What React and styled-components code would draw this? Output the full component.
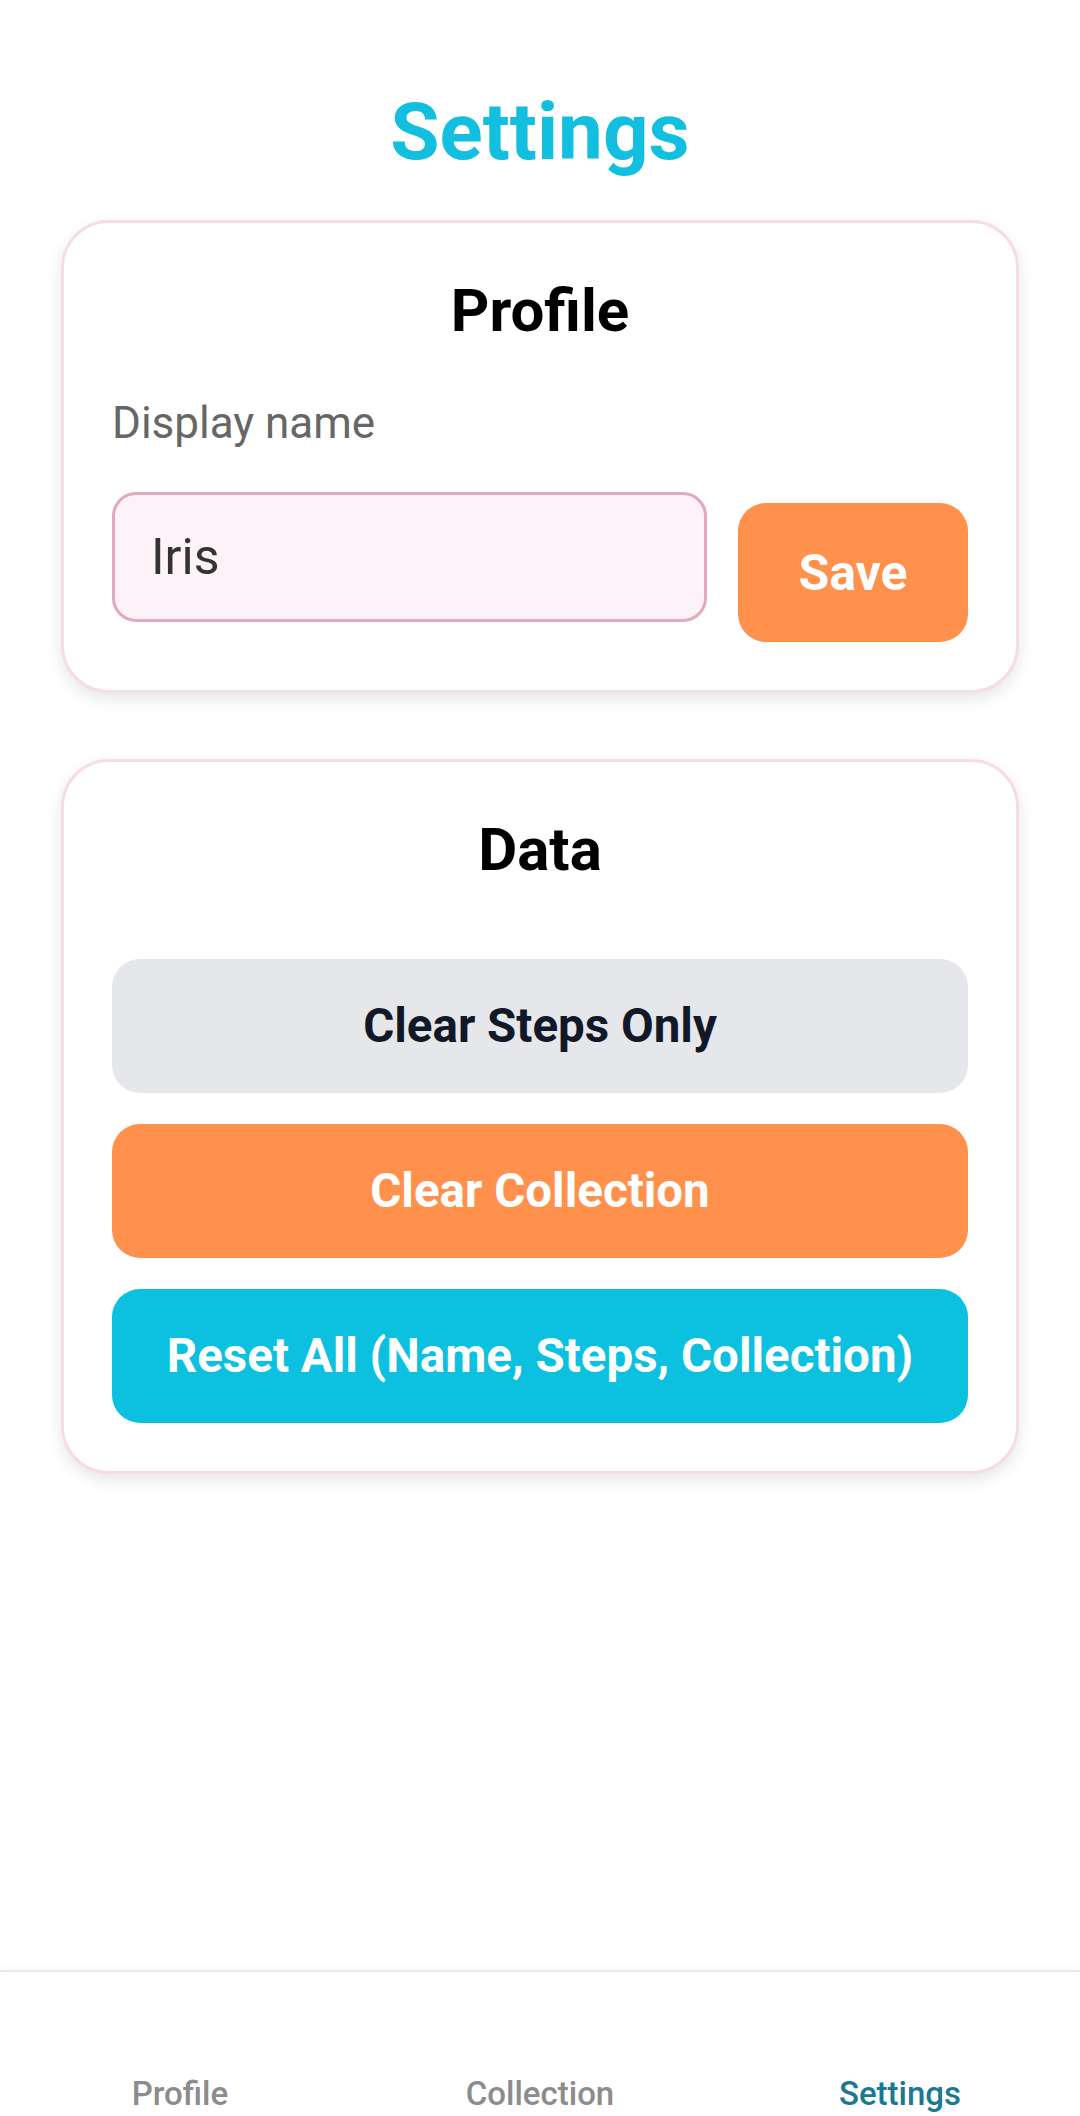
import React, { useState } from "react";
import styled, { createGlobalStyle } from "styled-components";

const GlobalStyle = createGlobalStyle`
    html, body {
        margin: 0;
        padding: 0;
        background: #ffffff;
    }
    body {
        font-family: Roboto, "Noto Sans", "Liberation Sans", sans-serif;
    }
    * {
        box-sizing: border-box;
    }
`;

const Page = styled.div`
    min-height: 100vh;
    display: flex;
    flex-direction: column;
`;

const Main = styled.main`
    flex: 1;
    display: flex;
    flex-direction: column;
    padding: 84px 61px 0;
`;

const Title = styled.h1`
    margin: 0 0 40px;
    font-size: 80px;
    line-height: 96px;
    font-weight: 700;
    color: #12bfdf;
    text-align: center;
`;

const Card = styled.section`
    background: #ffffff;
    border: 3px solid #f7dbe5;
    border-radius: 48px;
    padding: 52px 48px 48px;
    box-shadow: 0 6px 16px rgba(0, 0, 0, 0.1);
    margin-bottom: 66px;
`;

const CardTitle = styled.h2`
    margin: 0;
    font-size: 60px;
    line-height: 72px;
    font-weight: 700;
    color: #000000;
    text-align: center;
`;

const Label = styled.label`
    display: block;
    margin: 50px 0 43px;
    font-size: 44px;
    line-height: 52px;
    color: #666666;
`;

const Row = styled.div`
    display: flex;
    align-items: flex-start;
    gap: 31px;
`;

const NameInput = styled.input`
    flex: 1;
    min-width: 0;
    height: 130px;
    padding: 0 36px;
    border: 3px solid #e0aabf;
    border-radius: 24px;
    background: #fdf2f7;
    font-family: inherit;
    font-size: 50px;
    color: #333333;
    outline: none;
`;

const SaveButton = styled.button`
    margin-top: 11px;
    width: 230px;
    height: 139px;
    border: none;
    border-radius: 28px;
    background: #ff914d;
    color: #ffffff;
    font-family: inherit;
    font-size: 50px;
    font-weight: 700;
`;

const ButtonStack = styled.div`
    display: flex;
    flex-direction: column;
    gap: 31px;
    margin-top: 73px;
`;

const tones = {
    gray: { bg: "#e5e7eb", fg: "#111827" },
    orange: { bg: "#ff914d", fg: "#ffffff" },
    cyan: { bg: "#0cc0df", fg: "#ffffff" },
};

const ActionButton = styled.button`
    height: 134px;
    border: none;
    border-radius: 28px;
    background: ${({ $tone }) => tones[$tone].bg};
    color: ${({ $tone }) => tones[$tone].fg};
    font-family: inherit;
    font-size: 47.5px;
    font-weight: 700;
`;

const NavBar = styled.nav`
    height: 146px;
    display: grid;
    grid-template-columns: repeat(3, 1fr);
    align-items: end;
    padding-bottom: 2px;
    border-top: 2px solid #e9e9e9;
    box-shadow: 0 -2px 6px rgba(0, 0, 0, 0.03);
    background: #ffffff;
`;

const NavItem = styled.div`
    text-align: center;
    font-size: 33px;
    line-height: 40px;
    font-weight: 500;
    color: ${({ $active }) => ($active ? "#1b7895" : "#8c8c8c")};
`;

export default function App() {
    const [name, setName] = useState("Iris");

    return (
        <Page>
            <GlobalStyle />
            <Main>
                <Title>Settings</Title>

                <Card>
                    <CardTitle>Profile</CardTitle>
                    <Label htmlFor="display-name">Display name</Label>
                    <Row>
                        <NameInput
                            id="display-name"
                            value={name}
                            onChange={(e) => setName(e.target.value)}
                        />
                        <SaveButton>Save</SaveButton>
                    </Row>
                </Card>

                <Card>
                    <CardTitle>Data</CardTitle>
                    <ButtonStack>
                        <ActionButton $tone="gray">Clear Steps Only</ActionButton>
                        <ActionButton $tone="orange">Clear Collection</ActionButton>
                        <ActionButton $tone="cyan">Reset All (Name, Steps, Collection)</ActionButton>
                    </ButtonStack>
                </Card>
            </Main>

            <NavBar>
                <NavItem>Profile</NavItem>
                <NavItem>Collection</NavItem>
                <NavItem $active>Settings</NavItem>
            </NavBar>
        </Page>
    );
}
